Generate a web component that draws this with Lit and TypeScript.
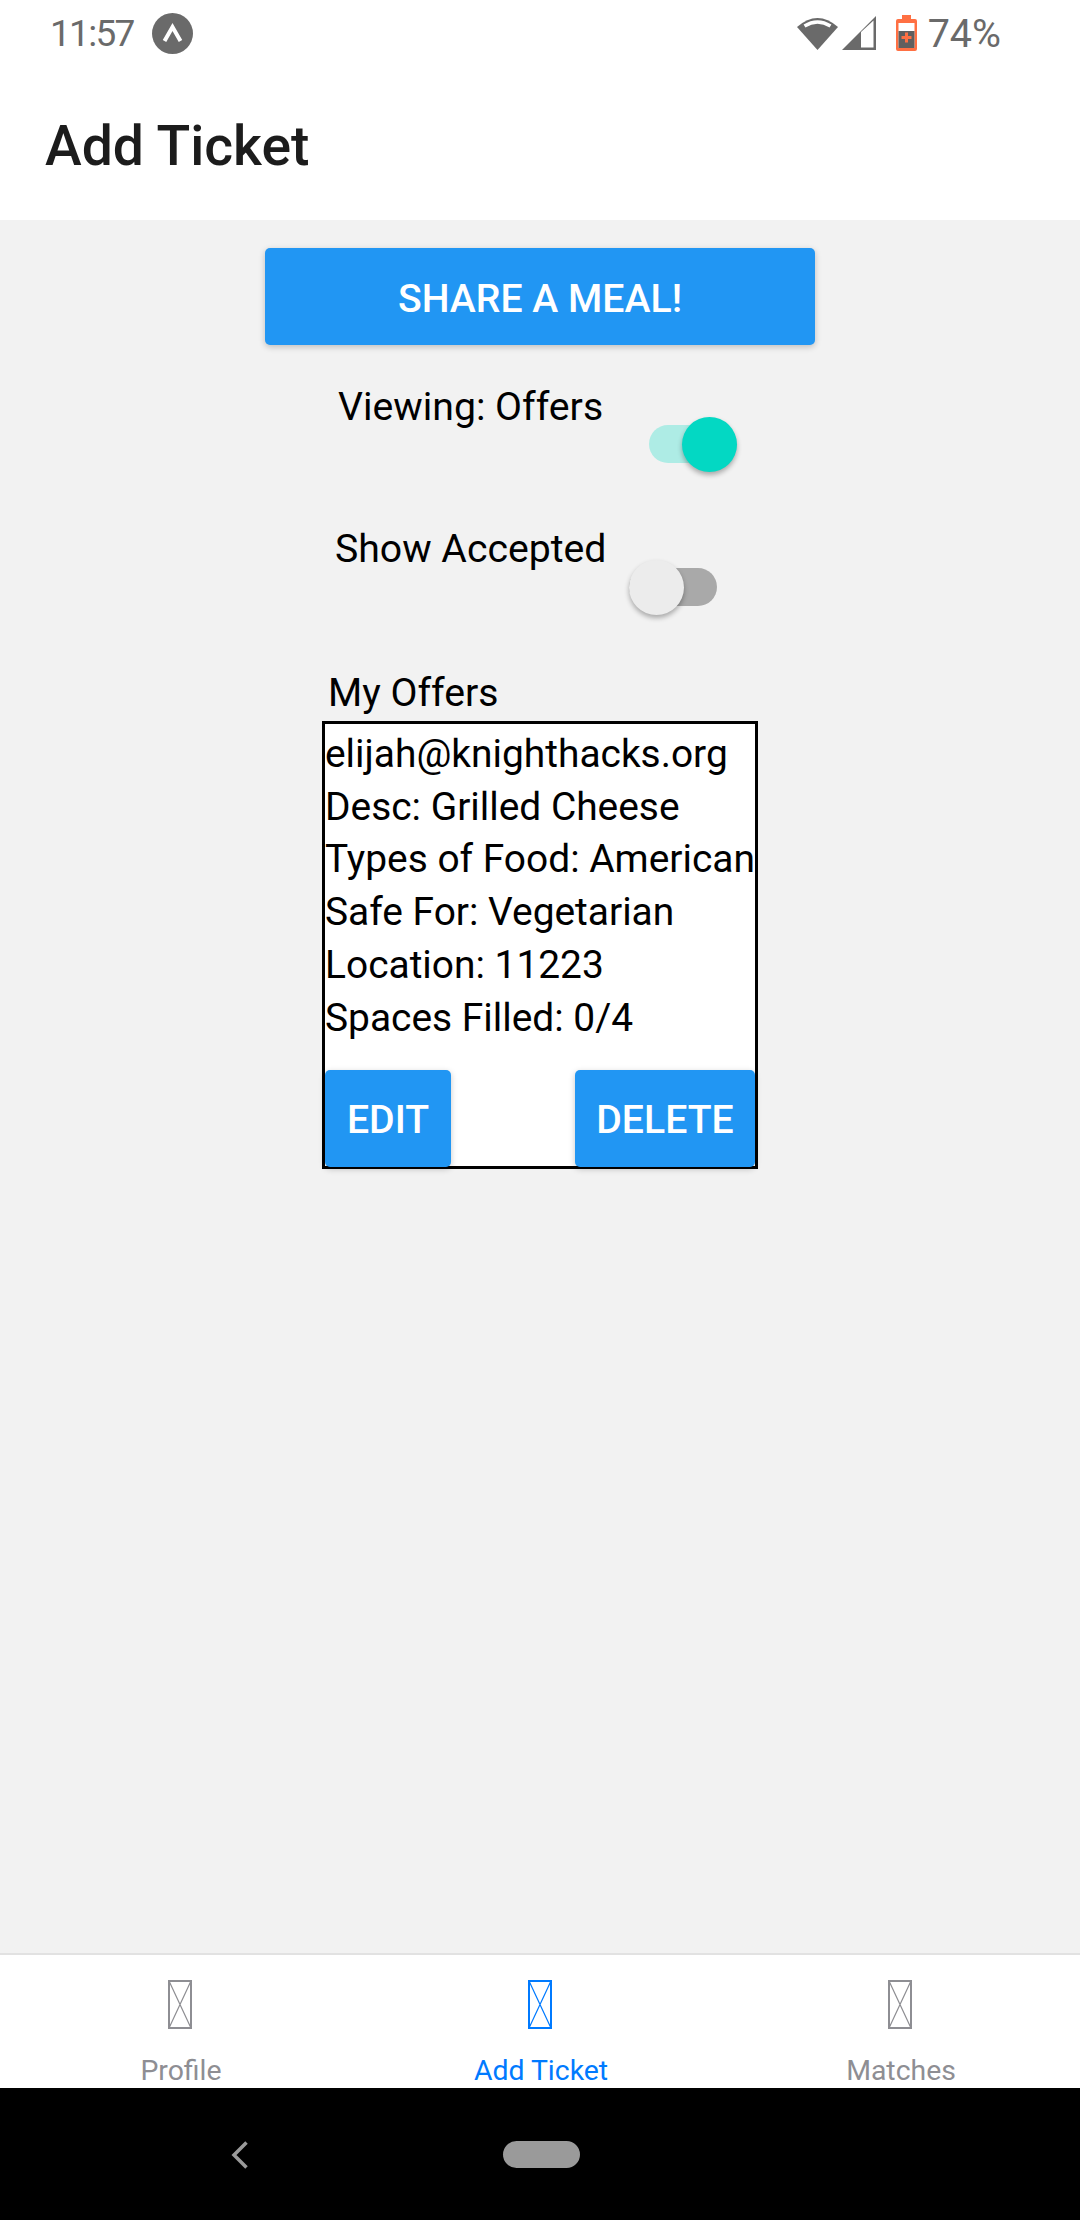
import { LitElement, html, css } from "lit";
import { customElement } from "lit/decorators.js";

@customElement("app-root")
export class AppRoot extends LitElement {
  static styles = css`
    :host { display: block; width: 1080px; height: 2220px; font-family: Roboto, sans-serif; color: #000; }
    .page { display: flex; flex-direction: column; height: 2220px; background: #f2f2f2; overflow: hidden; }
    .status { height: 66px; background: #fff; display: flex; align-items: center; padding: 0 79px 0 50px; color: #6a6a6a; font-size: 38.5px; }
    .time { font-size: 37px; letter-spacing: -1.7px; }
    .status .logo { margin-left: 18px; display: block; }
    .spacer { flex: 1; }
    .status svg { display: block; flex: none; }
    .signal { margin-left: 4px; }
    .battery { margin-left: 20px; }
    .pct { margin-left: 11px; font-size: 39.5px; }
    .header { height: 154px; background: #fff; box-sizing: border-box; padding: 48px 0 0 45px; font-size: 55.3px; font-weight: 500; color: #1c1c1c; line-height: 65px; }
    .main { flex: 1; display: flex; flex-direction: column; align-items: center; padding-top: 28px; }
    .btn { box-sizing: border-box; padding-top: 4px; background: #2196f3; color: #fff; font-weight: 500; font-size: 39.2px; border-radius: 5px; box-shadow: 0 2px 6px rgba(0,0,0,.22); height: 97px; display: flex; align-items: center; justify-content: center; flex: none; }
    .share { width: 550px; }
    .row { align-self: flex-start; display: flex; align-items: flex-start; line-height: 52.8px; font-size: 39.2px; }
    .row1 { margin: 36px 0 0 338px; }
    .row2 { margin: 51px 0 0 335px; }
    .toggle { position: relative; width: 88px; height: 38px; margin-bottom: 9px; border-radius: 19px; }
    .row1 .toggle { margin-top: 44px; margin-left: 46px; background: #aeece5; }
    .row2 .toggle { margin-top: 45px; margin-left: 23px; background: #a9a9a9; }
    .thumb { position: absolute; top: -8px; width: 55px; height: 55px; border-radius: 50%; box-shadow: 0 3px 5px rgba(0,0,0,.3); }
    .row1 .thumb { right: 0; background: #03d8c3; }
    .row2 .thumb { left: 0; background: #ececec; }
    .wrap { width: 436px; margin-top: 52px; }
    .title { font-size: 39.2px; line-height: 52.8px; padding-left: 6px; margin-bottom: 1px; }
    .card { box-sizing: border-box; width: 436px; height: 448px; border: 3px solid #000; background: #fff; display: flex; flex-direction: column; padding-top: 4px; }
    .lines { font-size: 38.9px; line-height: 52.8px; white-space: nowrap; }
    .actions { display: flex; justify-content: space-between; margin-top: 25px; }
    .edit { width: 126px; }
    .delete { width: 180px; }
    .tabs { height: 135px; box-sizing: border-box; background: #fff; border-top: 2px solid #e2e2e2; display: flex; overflow: hidden; }
    .tab { flex: 1; display: flex; flex-direction: column; align-items: center; padding-top: 25px; color: #8e8e93; font-size: 28.4px; line-height: 32px; }
    .tab.on { color: #007aff; }
    .tab svg { display: block; margin-bottom: 26px; }
    .tab span { padding-left: 2px; }
    .nav { height: 132px; background: #000; display: flex; padding-top: 53px; box-sizing: border-box; }
    .back { margin-left: 231px; display: block; }
    .pill { margin-left: 255px; width: 77px; height: 27px; border-radius: 14px; background: #9a9a9a; }
  `;

  private tab(label: string, on = false) {
    return html`<div class="tab ${on ? "on" : ""}">
      <svg width="24" height="49" viewBox="0 0 24 49" fill="none" stroke="currentColor">
        <rect x="1" y="1" width="22" height="47" stroke-width="2"></rect>
        <path d="M1.5 2 L22.5 47 M22.5 2 L1.5 47" stroke-width="1.2"></path>
      </svg>
      <span>${label}</span>
    </div>`;
  }

  render() {
    return html`<div class="page">
      <div class="status">
        <span class="time">11:57</span>
        <svg class="logo" width="41" height="41" viewBox="0 0 41 41">
          <circle cx="20.5" cy="20.5" r="20.5" fill="#6a6a6a"></circle>
          <path d="M12.5 28 L20.5 14 L28.5 28" fill="none" stroke="#fff" stroke-width="4"></path>
        </svg>
        <div class="spacer"></div>
        <svg width="41" height="34" viewBox="0 0 41 34">
          <path d="M0 11 Q20.5 -7 41 11 L20.5 34 Z" fill="#6a6a6a"></path>
          <path d="M7.5 10 Q20.5 2 33.5 10" fill="none" stroke="#fff" stroke-width="3.5"></path>
        </svg>
        <svg class="signal" width="34" height="34" viewBox="0 0 34 34">
          <path d="M34 0 V34 H0 Z" fill="#6a6a6a"></path>
          <path d="M19 16 L31.5 4.5 V31.5 H19 Z" fill="#fff"></path>
        </svg>
        <svg class="battery" width="21" height="36" viewBox="0 0 21 36">
          <path d="M6 0 H15 V4 H19 Q21 4 21 6 V34 Q21 36 19 36 H2 Q0 36 0 34 V6 Q0 4 2 4 H6 Z" fill="#ff7043"></path>
          <rect x="2.5" y="8" width="16" height="25" fill="#fff"></rect>
          <rect x="2.5" y="16" width="16" height="17" fill="#5f5f5f"></rect>
          <path d="M10.5 17.5 V27.5 M5.5 22.5 H15.5" stroke="#ff7043" stroke-width="3"></path>
        </svg>
        <span class="pct">74%</span>
      </div>
      <div class="header">Add Ticket</div>
      <div class="main">
        <div class="btn share">SHARE A MEAL!</div>
        <div class="row row1"><span>Viewing: Offers</span><div class="toggle"><div class="thumb"></div></div></div>
        <div class="row row2"><span>Show Accepted</span><div class="toggle"><div class="thumb"></div></div></div>
        <div class="wrap">
          <div class="title">My Offers</div>
          <div class="card">
            <div class="lines">
              <div>elijah@knighthacks.org</div>
              <div>Desc: Grilled Cheese</div>
              <div>Types of Food: American</div>
              <div>Safe For: Vegetarian</div>
              <div>Location: 11223</div>
              <div>Spaces Filled: 0/4</div>
            </div>
            <div class="actions">
              <div class="btn edit">EDIT</div>
              <div class="btn delete">DELETE</div>
            </div>
          </div>
        </div>
      </div>
      <div class="tabs">
        ${this.tab("Profile")}
        ${this.tab("Add Ticket", true)}
        ${this.tab("Matches")}
      </div>
      <div class="nav">
        <svg class="back" width="17" height="28" viewBox="0 0 17 28">
          <path d="M15.5 1.5 L3 14 L15.5 26.5" fill="none" stroke="#9a9a9a" stroke-width="3.5"></path>
        </svg>
        <div class="pill"></div>
      </div>
    </div>`;
  }
}
